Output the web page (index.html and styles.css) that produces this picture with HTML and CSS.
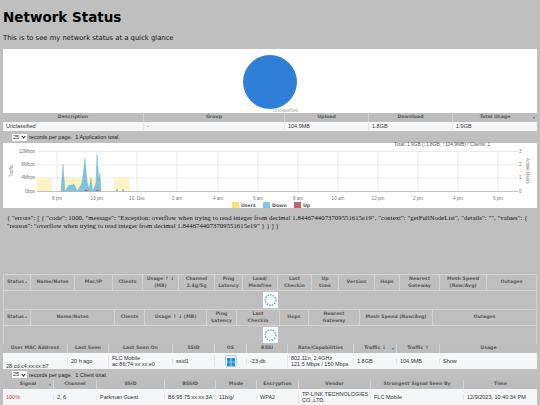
FILE: index.html
```html
<!DOCTYPE html>
<html lang="en">
<head>
<meta charset="utf-8">
<title>Network Status</title>
<link rel="stylesheet" href="styles.css">
</head>
<body>
<h1 class="title">Network Status</h1>
<p class="intro">This is to see my network status at a quick glance</p>

<section class="panel pie-panel">
  <svg class="pie" viewBox="0 0 60 60" aria-hidden="true"><circle cx="30" cy="30" r="27" fill="#2f7ed8"/></svg>
  <span class="pie-label">Unclassified</span>
</section>

<div class="grid apps head">
  <div>Description</div><div>Group</div><div>Upload</div><div>Download</div><div class="sorted">Total Usage<i class="arrow"></i></div>
</div>
<div class="grid apps row">
  <div>Unclassified</div><div>-</div><div>104.9MB</div><div>1.8GB</div><div>1.9GB</div>
</div>
<div class="pager tall"><span class="picker"><select class="size"><option>25</option></select></span><span>records per page.&nbsp; 1 Application total.</span></div>

<section class="panel chart-panel">
  <svg class="chart" viewBox="0 0 534 65" aria-label="Traffic chart">
    <text class="ax total" x="391" y="1.5" dominant-baseline="middle">Total: 1.9GB (↓1.8GB, ↑104.9MB) / Clients: 1</text>
    <g class="gridlines">
      <path d="M34 8.5H515M34 22H515M34 35H515"/>
      <path d="M54 8.5V48.5M94 8.5V48.5M134 8.5V48.5M174 8.5V48.5M215 8.5V48.5M255 8.5V48.5M295 8.5V48.5M335 8.5V48.5M375 8.5V48.5M415 8.5V48.5M455 8.5V48.5M495 8.5V48.5"/>
    </g>
    <path class="users" d="M34 35H47L49 48.5H34ZM57 48.5L58 35H96L99 48.5ZM111 48.5L112 35H125L127 48.5Z"/>
    <path class="down" d="M58 48.5L60 21L62 48.5L64 45L66 42L69 42L71 41L73 45L74 48.5L79 40L82 15L84 38L86 47L87 41L88 35L89.5 48.5L93 40L94 12L96 37L97 30L98 48.5ZM113 48.5L114 46L115 48.5ZM119 48.5L120 46L121 48.5Z"/>
    <path class="up" d="M80 48.5L83 46.5L86 48.5ZM92 48.5L94 46.5L97 48.5Z"/>
    <path class="baseline" d="M34 48.5H515"/>
    <g class="ax end">
      <text x="32" y="9.5">12Mbps</text><text x="32" y="23">8Mbps</text><text x="32" y="36">4Mbps</text><text x="32" y="49.5">0bps</text>
    </g>
    <g class="ax mid">
      <text x="54" y="56.5">8 pm</text><text x="94" y="56.5">10 pm</text><text x="134" y="56.5">10. Dec</text><text x="174" y="56.5">2 am</text><text x="215" y="56.5">4 am</text><text x="255" y="56.5">6 am</text><text x="295" y="56.5">8 am</text><text x="335" y="56.5">10 am</text><text x="375" y="56.5">12 pm</text><text x="415" y="56.5">2 pm</text><text x="455" y="56.5">4 pm</text><text x="495" y="56.5">6 pm</text>
    </g>
    <g class="ax">
      <text x="516" y="9.5">3</text><text x="516" y="23">2</text><text x="516" y="36">1</text><text x="516" y="49.5">0</text>
    </g>
    <text class="ax mid" transform="translate(10 28) rotate(-90)">Traffic</text>
    <text class="ax mid" transform="translate(523 28) rotate(90)">Active Users</text>
    <rect x="229" y="59" width="7" height="6" class="users-key"/><text class="key" x="238" y="63.5">Users</text>
    <rect x="260" y="59" width="7" height="6" class="down-key"/><text class="key" x="269" y="63.5">Down</text>
    <rect x="291" y="59" width="7" height="6" class="up-key"/><text class="key" x="300" y="63.5">Up</text>
  </svg>
</section>

<p class="json">{ "errors": [ { "code": 1000, "message": "Exception: overflow when trying to read integer from decimal 1.8446744073709551615e19", "context": "getFullNodeList", "details": "", "values": { "reason": "overflow when trying to read integer from decimal 1.8446744073709551615e19" } } ] }</p>

<div class="boxed first">
  <div class="grid nodes head-box">
    <div>Status<i class="up-arrow"></i></div><div>Name/Notes</div><div>Mac/IP</div><div>Clients</div><div>Usage ↑ ↓<br>(MB)</div><div>Channel<br>2.4g/5g</div><div>Ping<br>Latency</div><div>Load/<br>Memfree</div><div>Last<br>Checkin</div><div>Up<br>time</div><div>Version</div><div>Hops</div><div>Nearest<br>Gateway</div><div>Mesh Speed<br>(Now/Avg)</div><div>Outages</div>
  </div>
  <div class="loading">
    <span class="loader"><svg viewBox="0 0 16 16" aria-hidden="true"><circle cx="8" cy="8" r="5.6" class="ring"/></svg></span>
  </div>
</div>

<div class="boxed">
  <div class="grid mesh head-box">
    <div>Status<i class="up-arrow"></i></div><div>Name/Notes</div><div>Clients</div><div>Usage ↑ ↓ (MB)</div><div>Ping<br>Latency</div><div>Last<br>Checkin</div><div>Hops</div><div>Nearest<br>Gateway</div><div>Mesh Speed (Now/Avg)</div><div>Outages</div>
  </div>
  <div class="loading">
    <span class="loader"><svg viewBox="0 0 16 16" aria-hidden="true"><circle cx="8" cy="8" r="5.6" class="ring"/></svg></span>
  </div>
</div>

<div class="grid clients head">
  <div>User MAC Address</div><div>Last Seen</div><div>Last Seen On</div><div>SSID</div><div>OS</div><div>RSSI</div><div>Rate/Capabilities</div><div class="sorted">Traffic ↓<i class="arrow"></i></div><div>Traffic ↑</div><div>Usage</div>
</div>
<div class="grid clients row big">
  <div class="low">28:cd:c4:xx:xx:b7</div><div>20 h ago</div><div>FLC Mobile<br>ac:86:74:xx:xx:e0</div><div>ssid1</div>
  <div class="center"><span class="os"><svg viewBox="0 0 10 10" aria-hidden="true"><path d="M0 0H4.6V4.6H0ZM5.4 0H10V4.6H5.4ZM0 5.4H4.6V10H0ZM5.4 5.4H10V10H5.4Z"/></svg></span></div>
  <div>-23 db</div><div>802.11n, 2.4GHz<br>121.5 Mbps / 150 Mbps</div><div>1.8GB</div><div>104.9MB</div><div>Show</div>
</div>
<div class="pager"><span class="picker"><select class="size"><option>25</option></select></span><span>records per page.&nbsp; 1 Client total.</span></div>

<div class="grid signals head">
  <div class="sorted">Signal<i class="arrow"></i></div><div>Channel</div><div>SSID</div><div>BSSID</div><div>Mode</div><div>Encryption</div><div>Vendor</div><div>Strongest Signal Seen By</div><div>Time</div>
</div>
<div class="grid signals row big">
  <div class="red">100%</div><div>2, 6</div><div>Parkman Guest</div><div>B6:95:75:xx:xx:3A</div><div>11b/g/</div><div>WPA2</div><div>TP-LINK TECHNOLOGIES<br>CO.,LTD.</div><div>FLC Mobile</div><div>12/9/2023, 10:40:34 PM</div>
</div>
</body>
</html>
```
FILE: styles.css
```css
html, body { margin: 0; padding: 0; }
body {
  width: 534px;
  height: 405px;
  overflow: hidden;
  padding: 0 3px;
  background: #bfbfbf;
  font-family: "Liberation Sans", Arial, sans-serif;
  font-size: 5.5px;
  color: #222;
}
.title {
  margin: 0;
  padding-top: 8px;
  height: 19px;
  font: bold 13.5px/19px "DejaVu Sans", sans-serif;
  color: #000;
}
.intro {
  margin: 0;
  padding-top: 6px;
  height: 16px;
  font: 6.8px/11px "DejaVu Sans", sans-serif;
  color: #111;
}
.panel { background: #fff; position: relative; }
.pie-panel { height: 64px; display: flex; justify-content: center; align-items: flex-start; }
.pie { width: 60px; height: 60px; margin-top: 2.5px; }
.pie-label {
  position: absolute;
  left: 270px;
  bottom: 0;
  font-size: 4.6px;
  line-height: 5px;
  color: #a6a6a6;
}
.grid { display: grid; }
.grid > div { padding: 0 3px; min-width: 0; white-space: nowrap; }
.head { height: 9px; background: #bdbdbd; }
.head > div, .head-box > div {
  font: bold 4.7px/6.4px "DejaVu Sans", sans-serif;
  color: #5c5c5c;
  text-align: center;
  display: flex;
  align-items: center;
  justify-content: center;
  border-left: 1px solid #d2d2d2;
  position: relative;
  padding: 0;
}
.head > div:first-child, .head-box > div:first-child { border-left: 0; }
.row { height: 9px; background: #f4f6f8; align-items: center; line-height: 6.5px; color: #333; }
.row > div { border-left: 1px solid #e4e6e8; }
.row > div:first-child { border-left: 0; }
.row.big { height: 16px; }
.apps { grid-template-columns: 140px 141px 84px 84px 85px; }
.nodes { grid-template-columns: 26px 44px 38px 30px 36px 36px 28px 35px 34px 27px 36px 25px 40px 47px 1fr; }
.mesh { grid-template-columns: 26px 84px 30px 62px 30px 43px 29px 51px 73px 1fr; }
.clients { grid-template-columns: 64px 41px 64px 42px 32px 41px 66px 43px 43px 1fr; }
.signals { grid-template-columns: 50px 43px 68px 51px 41px 42px 72px 93px 1fr; }
.head-box > div { height: 15px; }
.pager {
  height: 11px;
  display: flex;
  align-items: center;
  gap: 2px;
  padding-left: 9px;
  background: #bfbfbf;
  color: #222;
}
.pager.tall { height: 12px; }
.picker { position: relative; display: block; width: 15px; height: 7px; }
.picker::after {
  content: "";
  position: absolute;
  right: 2px;
  top: 1.5px;
  width: 2px;
  height: 2px;
  border-right: 0.8px solid #222;
  border-bottom: 0.8px solid #222;
  transform: rotate(45deg);
}
.size {
  display: block;
  appearance: none;
  width: 15px;
  height: 7px;
  padding: 0 0 0 1px;
  border: 0;
  border-radius: 0;
  background: #fff;
  font: 5.5px/7px "Liberation Sans", sans-serif;
  color: #222;
}
.chart-panel { height: 65px; }
.chart { display: block; width: 534px; height: 65px; overflow: visible; }
.gridlines path { stroke: #e3e3e3; stroke-width: 0.7; fill: none; }
.users { fill: #fff3c6; stroke: #ffe9a6; stroke-width: 0.4; }
.down { fill: #7fc4df; stroke: #4da5c6; stroke-width: 0.3; }
.up { fill: #b9626f; }
.baseline { stroke: #b5b5b5; stroke-width: 0.8; }
.ax { font: 4.6px "Liberation Sans", sans-serif; fill: #777; }
.total { font-size: 4.85px; fill: #555; }
.end text { text-anchor: end; }
.mid, .mid text { text-anchor: middle; }
.key { font: bold 4.7px "DejaVu Sans", sans-serif; fill: #555; }
.users-key { fill: #ffdf6e; }
.down-key { fill: #86c8e2; }
.up-key { fill: #c06272; }
.json {
  margin: 0;
  padding: 6px 4px 0;
  height: 60px;
  font: 6.65px/7.8px "Liberation Serif", serif;
  letter-spacing: 0.08px;
  color: #111;
}
.boxed { border: 1px solid #d2d2d2; border-bottom: 0; border-radius: 2px 2px 0 0; }
.head-box { border-bottom: 1px solid #d2d2d2; }
.loading { height: 18px; display: flex; justify-content: center; align-items: center; }
.loader { width: 15px; height: 16px; background: #fff; display: block; }
.loader svg { display: block; width: 15px; height: 16px; }
.ring { fill: none; stroke: #5b9fdc; stroke-width: 1.8; stroke-dasharray: 1.7 1.1; opacity: 0.8; }
.arrow {
  position: absolute;
  right: 2px;
  top: 4px;
  border: 1.6px solid transparent;
  border-top: 2px solid #3c87c8;
  border-bottom: 0;
}
.up-arrow {
  margin-left: 1px;
  margin-bottom: 2px;
  border: 1.6px solid transparent;
  border-bottom: 2px solid #3c87c8;
  border-top: 0;
}
.low { align-self: end; padding-bottom: 2px; }
.center { display: flex; justify-content: center; }
.os {
  width: 12px;
  height: 12px;
  padding: 1.5px;
  border: 0.5px solid #a9cde2;
  border-radius: 2px;
  background: #eef6fb;
  display: block;
  box-sizing: border-box;
}
.os svg { display: block; width: 8px; height: 8px; fill: #1f8fe0; }
.red { color: #e23b3b; }
```
